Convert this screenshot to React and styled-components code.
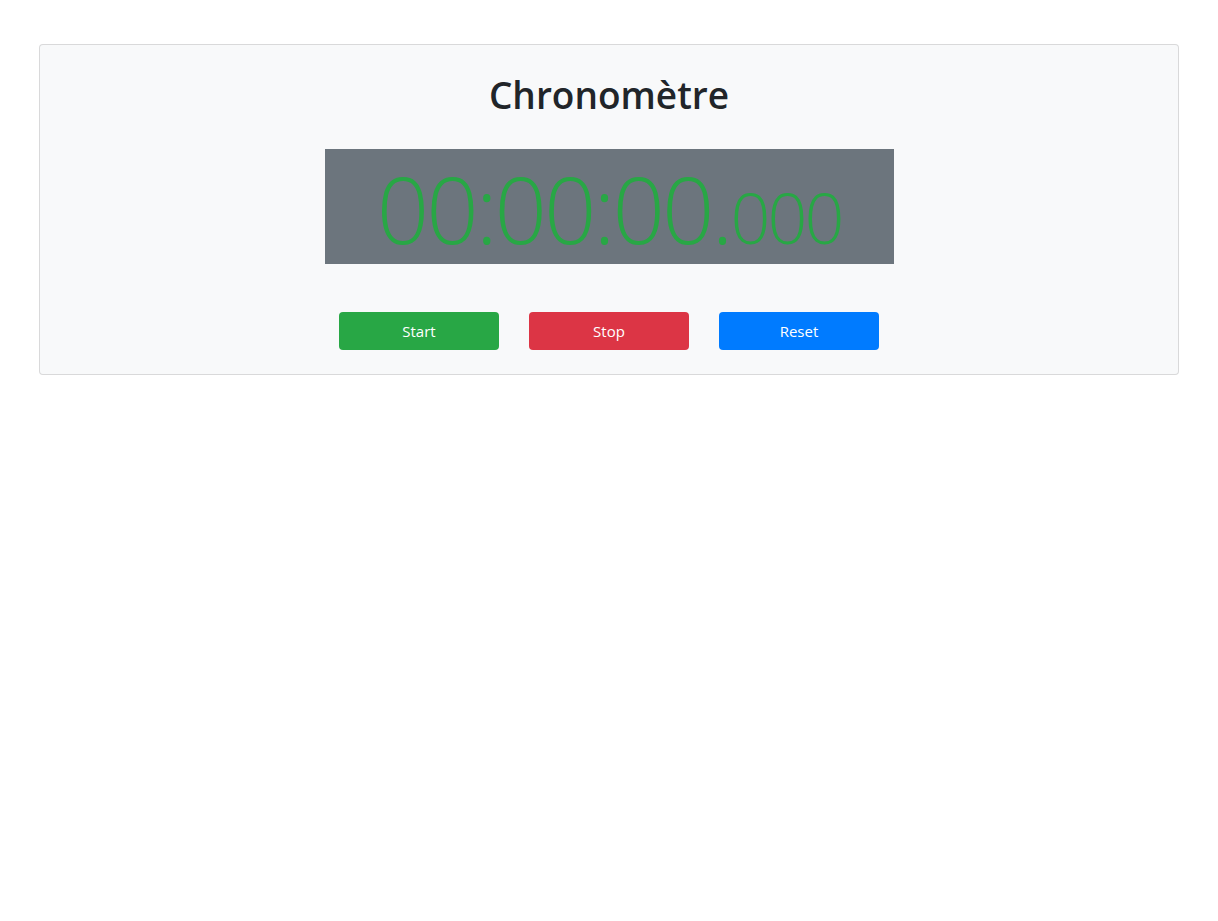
import React, { useState, useEffect, useRef } from 'react'
import styled, { createGlobalStyle } from 'styled-components'

const GlobalStyle = createGlobalStyle`
  body {
    margin: 0;
    background: #fff;
    font-family: "Open Sans", "Noto Sans", "Liberation Sans", sans-serif;
    color: #212529;
  }
`

const Container = styled.div`
  width: 1140px;
  margin: 44px auto 0;
`

const Card = styled.div`
  background: #f8f9fa;
  border: 1px solid rgba(0, 0, 0, 0.125);
  border-radius: 4px;
  padding: 26px 20px 24px;
  display: flex;
  flex-direction: column;
  align-items: center;
`

const Title = styled.h1`
  margin: 0 0 30px;
  font-size: 37px;
  line-height: 48px;
  font-weight: 600;
  color: #212529;
`

const Display = styled.div`
  box-sizing: border-box;
  width: 569px;
  height: 115px;
  padding-top: 4px;
  background: #6c757d;
  color: #28a745;
  text-align: center;
  font-weight: 300;
  font-size: 92px;
  line-height: 111px;
  letter-spacing: -3px;
  white-space: nowrap;
`

const Millis = styled.span`
  font-size: 70px;
  letter-spacing: -3px;
`

const Buttons = styled.div`
  display: flex;
  gap: 30px;
  margin-top: 48px;
`

const Button = styled.button`
  width: 160px;
  height: 38px;
  border: none;
  border-radius: 4px;
  background: ${(p) => p.$bg};
  color: #fff;
  font-family: inherit;
  font-size: 15px;
  line-height: 24px;
  cursor: pointer;
  padding: 0;
`

function pad(n, size = 2) {
  return String(n).padStart(size, '0')
}

function App() {
  const [elapsed, setElapsed] = useState(0)
  const [running, setRunning] = useState(false)
  const startRef = useRef(0)

  useEffect(() => {
    if (!running) return
    startRef.current = Date.now() - elapsed
    const id = setInterval(() => setElapsed(Date.now() - startRef.current), 31)
    return () => clearInterval(id)
  }, [running])

  const h = Math.floor(elapsed / 3600000)
  const m = Math.floor(elapsed / 60000) % 60
  const s = Math.floor(elapsed / 1000) % 60
  const ms = elapsed % 1000

  return (
    <>
      <GlobalStyle />
      <Container>
        <Card>
          <Title>Chronomètre</Title>
          <Display>
            {pad(h)}:{pad(m)}:{pad(s)}.<Millis>{pad(ms, 3)}</Millis>
          </Display>
          <Buttons>
            <Button $bg="#28a745" onClick={() => setRunning(true)}>
              Start
            </Button>
            <Button $bg="#dc3545" onClick={() => setRunning(false)}>
              Stop
            </Button>
            <Button
              $bg="#007bff"
              onClick={() => {
                setRunning(false)
                setElapsed(0)
              }}
            >
              Reset
            </Button>
          </Buttons>
        </Card>
      </Container>
    </>
  )
}

export default App
